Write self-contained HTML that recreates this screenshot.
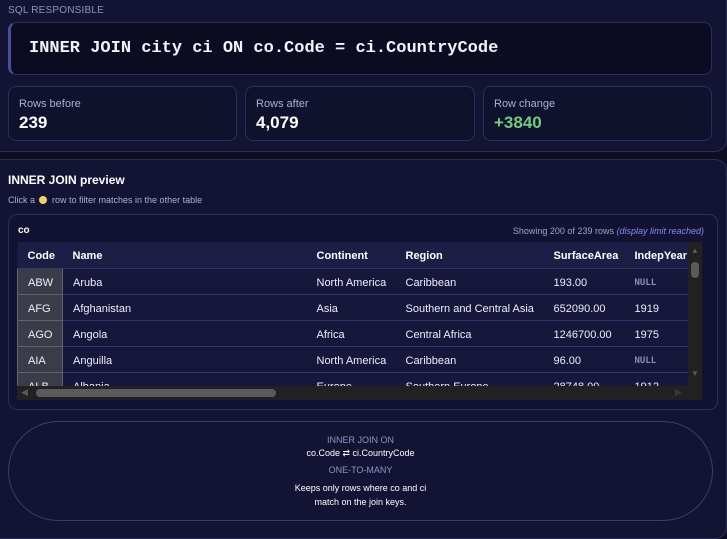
<!DOCTYPE html>
<html><head><meta charset="utf-8"><style>
*{box-sizing:border-box;margin:0;padding:0}
body{width:727px;height:523px;overflow:hidden;background:#0d0e1f;font-family:"Liberation Sans",sans-serif;color:#fff;position:relative}
.abs{position:absolute}
.p1{left:-10px;top:-20px;width:737px;height:172px;background:#131433;border:1px solid #2c2d5a;border-radius:12px}
.p2{left:-10px;top:159px;width:737px;height:380px;background:#131433;border:1px solid #2c2d5a;border-radius:12px}
.lbl{left:8px;top:5px;font-size:10px;color:#8d92c0;letter-spacing:.2px}
.code{left:8px;top:22px;width:704px;height:53px;background:#0b0c22;border:1px solid #2c2d5a;border-left:3px solid #4a4f9a;border-radius:8px;font-family:"Liberation Mono",monospace;font-weight:bold;font-size:17px;padding:16px 0 0 18px;color:#f3f3ff}
.card{top:86px;height:55px;background:#10112d;border:1px solid #2c2d5a;border-radius:8px;padding:11px 0 0 10px}
.card .t{font-size:11px;color:#aab0d8}
.card .v{font-size:17px;font-weight:bold;margin-top:3px}
.ttl{left:8px;top:173px;font-size:12px;font-weight:bold}
.sub{left:8px;top:195px;font-size:9px;color:#aab0d8}
.dot{display:inline-block;width:8px;height:8px;border-radius:50%;background:#e7d36a;margin:0 5px 0 4px;vertical-align:-1px}
.tc{left:8px;top:214px;width:710px;height:196px;border:1px solid #2c2d5a;border-radius:9px;background:#121332}
.co{left:18px;top:225px;font-size:10px;font-weight:bold}
.show{right:23px;top:226px;font-size:9px;color:#9aa3cf}
.show i{color:#7f8cf2}
.tbl{left:17px;top:242px;width:672px;height:145px;overflow:hidden;background:#16173a}
table{border-collapse:collapse;font-size:11px;width:680px}
th{text-align:left;font-weight:bold;height:26px;background:#1d1e45;padding:2px 0 0 10px;border-bottom:1px solid #34366a}
td{height:26px;padding:3px 0 0 10px;border-bottom:1px solid #34366a;color:#eef}
td.c{background:#3c3c48;border:1px solid #62626c;width:45px}
.null{font-family:"DejaVu Sans Mono",monospace;font-size:9px;color:#8a8fb0;font-weight:bold}
.vs{left:688px;top:242px;width:14px;height:158px;background:#212121}
.hs{left:17px;top:386px;width:685px;height:14px;background:#212121}
.oval{left:8px;top:421px;width:705px;height:100px;border:1px solid #3a3b72;border-radius:50px;background:#131433;text-align:center;font-size:9px}
</style></head><body>
<div class="abs p1"></div>
<div class="abs lbl">SQL RESPONSIBLE</div>
<div class="abs code">INNER JOIN city ci ON co.Code = ci.CountryCode</div>
<div class="abs card" style="left:8px;width:229px"><div class="t">Rows before</div><div class="v">239</div></div>
<div class="abs card" style="left:245px;width:230px"><div class="t">Rows after</div><div class="v">4,079</div></div>
<div class="abs card" style="left:483px;width:229px"><div class="t">Row change</div><div class="v" style="color:#6fcf7c">+3840</div></div>
<div class="abs p2"></div>
<div class="abs ttl">INNER JOIN preview</div>
<div class="abs sub">Click a<span class="dot"></span>row to filter matches in the other table</div>
<div class="abs tc"></div>
<div class="abs co">co</div>
<div class="abs show">Showing 200 of 239 rows <i>(display limit reached)</i></div>
<div class="abs tbl"><table>
<tr><th style="width:45px">Code</th><th style="width:244px">Name</th><th style="width:89px">Continent</th><th style="width:148px">Region</th><th style="width:81px">SurfaceArea</th><th>IndepYear</th></tr>
<tr><td class="c">ABW</td><td>Aruba</td><td>North America</td><td>Caribbean</td><td>193.00</td><td class="null">NULL</td></tr>
<tr><td class="c">AFG</td><td>Afghanistan</td><td>Asia</td><td>Southern and Central Asia</td><td>652090.00</td><td>1919</td></tr>
<tr><td class="c">AGO</td><td>Angola</td><td>Africa</td><td>Central Africa</td><td>1246700.00</td><td>1975</td></tr>
<tr><td class="c">AIA</td><td>Anguilla</td><td>North America</td><td>Caribbean</td><td>96.00</td><td class="null">NULL</td></tr>
<tr><td class="c">ALB</td><td>Albania</td><td>Europe</td><td>Southern Europe</td><td>28748.00</td><td>1912</td></tr>
</table></div>
<div class="abs vs"><div class="abs" style="left:3px;top:20px;width:8px;height:16px;border-radius:4px;background:#5a5a5a"></div><div class="abs" style="left:3px;top:4px;color:#5a5a5a;font-size:8px">▲</div><div class="abs" style="left:3px;top:127px;color:#5a5a5a;font-size:8px">▼</div></div>
<div class="abs hs"><div class="abs" style="left:19px;top:3px;width:240px;height:8px;border-radius:4px;background:#5a5a5a"></div><div class="abs" style="left:4px;top:1px;color:#5a5a5a;font-size:9px">◀</div><div class="abs" style="left:658px;top:1px;color:#3a3a3a;font-size:9px">▶</div></div>
<div class="abs oval">
<div style="margin-top:13px;color:#8d95c8">INNER JOIN ON</div>
<div style="margin-top:3px">co.Code ⇄ ci.CountryCode</div>
<div style="margin-top:6px;color:#8d95c8">ONE-TO-MANY</div>
<div style="margin-top:6px;line-height:14px">Keeps only rows where co and ci<br>match on the join keys.</div>
</div>
</body></html>
